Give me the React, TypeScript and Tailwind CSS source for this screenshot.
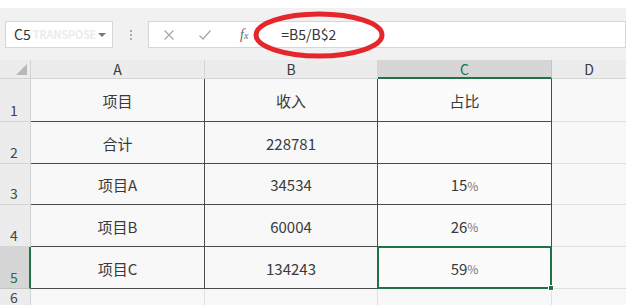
import React from "react";

const font = { fontFamily: '"Noto Sans CJK SC", "Noto Sans", sans-serif' };

const rows = [
  { n: "1", h: "h-[43px]", a: "项目", b: "收入", c: "占比" },
  { n: "2", h: "h-[42px]", a: "合计", b: "228781", c: "" },
  { n: "3", h: "h-[41px]", a: "项目A", b: "34534", c: "15%" },
  { n: "4", h: "h-[42px]", a: "项目B", b: "60004", c: "26%" },
  { n: "5", h: "h-[42px]", a: "项目C", b: "134243", c: "59%" },
];

function Pct({ v }: { v: string }) {
  if (!v.endsWith("%")) return <>{v}</>;
  return (
    <>
      {v.slice(0, -1)}
      <span className="text-[12px] text-[#777]">%</span>
    </>
  );
}

export default function App() {
  return (
    <div className="w-[640px] h-[305px] overflow-hidden bg-white text-[#3a3a3a]" style={font}>
      {/* toolbar / formula bar */}
      <div className="h-[8px] bg-white" />
      <div className="relative flex h-[52px] w-[626px] items-start bg-[#f1f1f1] pt-[13px] pl-[5px]">
        <div className="flex h-[27px] w-[108px] items-center border border-[#d6d6d6] bg-white pl-[8px] pr-[6px]">
          <span className="text-[14px] text-[#333]">C5</span>
          <span className="ml-[2px] text-[11px] font-bold tracking-tight text-[#ececec]">TRANSPOSE</span>
          <span className="ml-auto mt-[1px] h-0 w-0 border-x-[4px] border-t-[4px] border-x-transparent border-t-[#777]" />
        </div>
        <div className="flex h-[27px] w-[35px] flex-col items-center justify-center gap-[2px]">
          <span className="h-[2px] w-[2px] bg-[#aaa]" />
          <span className="h-[2px] w-[2px] bg-[#aaa]" />
          <span className="h-[2px] w-[2px] bg-[#aaa]" />
        </div>
        <div className="flex h-[27px] flex-1 items-center border border-[#d6d6d6] bg-white">
          <svg width="12" height="12" viewBox="0 0 12 12" className="ml-[14px]">
            <path d="M1.5 1.5 L10.5 10.5 M10.5 1.5 L1.5 10.5" stroke="#a8a8a8" strokeWidth="1.3" />
          </svg>
          <svg width="14" height="12" viewBox="0 0 14 12" className="ml-[23px]">
            <path d="M1.5 6.5 L5 10 L12.5 1.5" stroke="#a8a8a8" strokeWidth="1.3" fill="none" />
          </svg>
          <span
            className="ml-[28px] text-[14px] italic text-[#666]"
            style={{ fontFamily: '"Liberation Serif", serif' }}
          >
            f<span className="text-[10px]">x</span>
          </span>
          <span className="ml-[10px] h-[20px] w-px bg-[#d0d0d0]" />
          <span className="ml-[22px] text-[14px] text-[#333]">=B5/B$2</span>
        </div>
        <svg
          width="140"
          height="52"
          viewBox="0 0 140 52"
          className="absolute left-[249px] top-[2px]"
        >
          <ellipse cx="70" cy="25" rx="63" ry="21" fill="none" stroke="#e5262b" strokeWidth="5" />
        </svg>
      </div>

      {/* sheet */}
      <div className="grid w-[626px] grid-cols-[31px_174px_173px_174px_74px] bg-[#f8f8f8] text-[15px]">
        {/* header row */}
        <div className="relative h-[19px] border-b border-r border-[#d4d4d4] bg-[#ececec]">
          <span className="absolute bottom-[3px] right-[3px] h-0 w-0 border-b-[11px] border-l-[11px] border-l-transparent border-b-[#b8b8b8]" />
        </div>
        <div className="flex h-[19px] items-center justify-center border-b border-r border-[#d4d4d4] bg-[#ececec] text-[14px] leading-none">A</div>
        <div className="flex h-[19px] items-center justify-center border-b border-r border-[#d4d4d4] bg-[#ececec] text-[14px] leading-none">B</div>
        <div className="flex h-[19px] items-center justify-center border-b-2 border-r border-b-[#217346] border-r-[#c4c4c4] bg-[#d6d6d6] text-[14px] leading-none text-[#217346]">C</div>
        <div className="flex h-[19px] items-center justify-center border-b border-[#d4d4d4] bg-[#ececec] text-[14px] leading-none">D</div>

        {rows.map((r) => {
          const sel = r.n === "5";
          return (
            <React.Fragment key={r.n}>
              <div
                className={`${r.h} flex items-end pl-[10px] text-[14px] border-b ${
                  sel
                    ? "bg-[#d6d6d6] text-[#217346] border-r-2 border-r-[#217346] border-b-[#c4c4c4]"
                    : "bg-[#ececec] text-[#444] border-r border-[#d4d4d4]"
                }`}
              >
                {r.n}
              </div>
              <div className={`${r.h} flex items-center justify-center pt-[3px] border-b border-r border-[#4a4a4a]`}>{r.a}</div>
              <div className={`${r.h} flex items-center justify-center pt-[3px] border-b border-r border-[#4a4a4a]`}>{r.b}</div>
              <div className={`${r.h} relative flex items-center justify-center pt-[3px] border-b border-r border-[#4a4a4a] bg-[#fbfbfb]`}>
                <Pct v={r.c} />
                {sel && (
                  <>
                    <span className="absolute -left-px -top-px -right-px -bottom-px border-2 border-[#217346]" />
                    <span className="absolute -bottom-[3px] -right-[3px] h-[6px] w-[6px] border border-white bg-[#217346]" />
                  </>
                )}
              </div>
              <div className={`${r.h} border-b border-[#e0e0e0]`} />
            </React.Fragment>
          );
        })}

        {/* row 6 */}
        <div className="flex h-[22px] items-start pl-[10px] border-r border-[#d4d4d4] bg-[#ececec] text-[14px] text-[#444] leading-[16px]">6</div>
        <div className="h-[22px] border-r border-[#e0e0e0]" />
        <div className="h-[22px] border-r border-[#e0e0e0]" />
        <div className="h-[22px] border-r border-[#e0e0e0]" />
        <div className="h-[22px]" />
      </div>
    </div>
  );
}
